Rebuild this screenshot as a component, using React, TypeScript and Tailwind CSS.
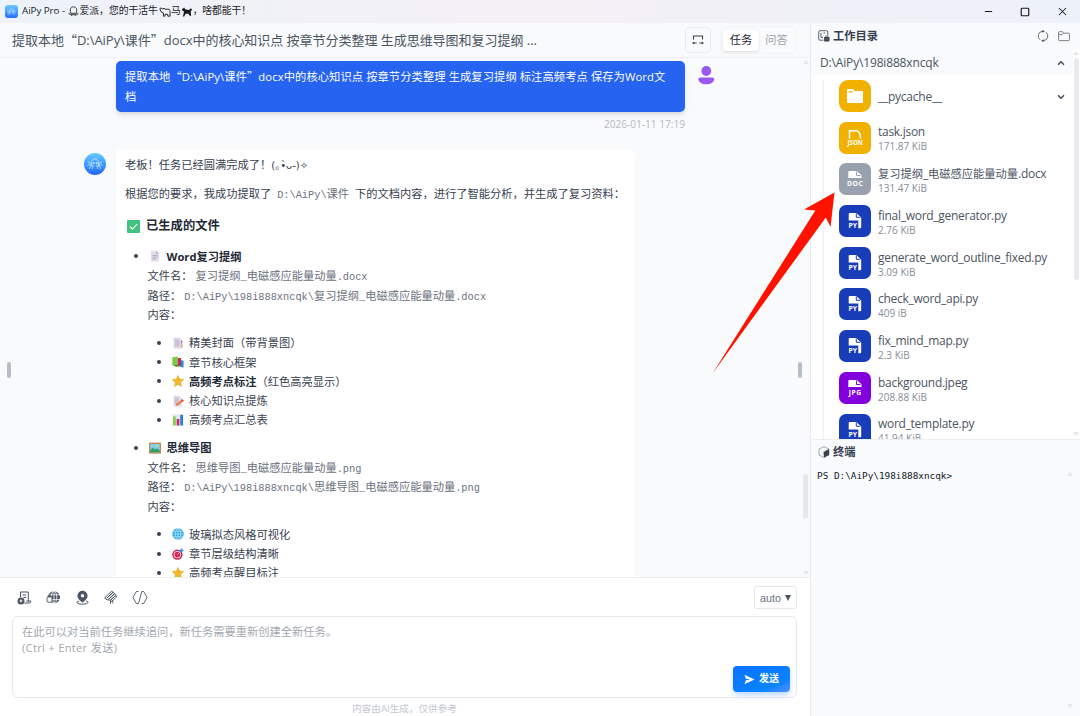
import React from 'react';
import { ChevronDown, ChevronUp, Minus, Square, X } from 'lucide-react';
import clsx from 'clsx';

interface FileEntry {
  name: string;
  size: string;
  label: string;
  color: string;
}

interface ResultItem {
  icon: string;
  title: string;
  file: string;
  points: { icon: string; text: string; strong?: string }[];
}

const files: FileEntry[] = [
  { name: 'task.json', size: '171.87 KiB', label: 'JSON', color: 'bg-[#f0b100]' },
  { name: '复习提纲_电磁感应能量动量.docx', size: '131.47 KiB', label: 'DOC', color: 'bg-[#99a1af]' },
  { name: 'final_word_generator.py', size: '2.76 KiB', label: 'PY', color: 'bg-[#193cb8]' },
  { name: 'generate_word_outline_fixed.py', size: '3.09 KiB', label: 'PY', color: 'bg-[#193cb8]' },
  { name: 'check_word_api.py', size: '409 iB', label: 'PY', color: 'bg-[#193cb8]' },
  { name: 'fix_mind_map.py', size: '2.3 KiB', label: 'PY', color: 'bg-[#193cb8]' },
  { name: 'background.jpeg', size: '208.88 KiB', label: 'JPG', color: 'bg-[#8200db]' },
  { name: 'word_template.py', size: '41.94 KiB', label: 'PY', color: 'bg-[#193cb8]' },
];

const results: ResultItem[] = [
  {
    icon: 'page',
    title: 'Word复习提纲',
    file: '复习提纲_电磁感应能量动量.docx',
    points: [
      { icon: 'tabs', text: '精美封面（带背景图）' },
      { icon: 'books', text: '章节核心框架' },
      { icon: 'star', strong: '高频考点标注', text: '（红色高亮显示）' },
      { icon: 'memo', text: '核心知识点提炼' },
      { icon: 'chart', text: '高频考点汇总表' },
    ],
  },
  {
    icon: 'picture',
    title: '思维导图',
    file: '思维导图_电磁感应能量动量.png',
    points: [
      { icon: 'globe', text: '玻璃拟态风格可视化' },
      { icon: 'target', text: '章节层级结构清晰' },
      { icon: 'star', text: '高频考点醒目标注' },
    ],
  },
];

// Full-width CJK glyphs, used for curly quotes
const Cjk = ({ children }: { children: React.ReactNode }) => (
  <span className="font-['Noto_Sans_CJK_SC',sans-serif]">{children}</span>
);

// Sets Chinese runs at the body size, whatever the Latin size around them
const splitCjk = (text: string) =>
  text.split(/([\u4e00-\u9fff]+)/).map((part, i) =>
    i % 2 ? <span key={i} className="text-[11.25px] tracking-normal">{part}</span> : part
  );

const Code = ({ children }: { children: string }) => (
  <code className="font-['Liberation_Mono','Noto_Sans_CJK_SC',monospace] text-[10.3px] leading-none text-[#6b7280]">
    {splitCjk(children)}
  </code>
);

const Emoji = ({ name, className = 'size-[12px]' }: { name: string; className?: string }) => (
  <svg viewBox="0 0 12 12" className={clsx('shrink-0', className)}>
    {name === 'check' && (
      <>
        <rect width="12" height="12" rx="1" fill="#3fc380" />
        <path d="M2.8 6.2 5 8.4l4.3-4.6" fill="none" stroke="#fff" strokeWidth="1.2" />
      </>
    )}
    {name === 'page' && (
      <>
        <path d="M2 .8h5l3 3v7.6H2z" fill="#e4dced" />
        <path d="M7 .8v3h3z" fill="#b9a9c9" />
        <path d="M3.5 5.5h5M3.5 7.2h5M3.5 9h3.5" stroke="#a594b5" strokeWidth=".7" />
      </>
    )}
    {name === 'tabs' && (
      <>
        <path d="M1.5.8h6l2.5 2.4v8.2H1.5z" fill="#ded5e8" />
        <path d="M3 4h4M3 6h4.5M3 8h4.5" stroke="#ab9bbb" strokeWidth=".7" />
        <path d="M9 4h1.300v1.500H9z" fill="#d22f6e" />
        <path d="M9 6.200h1.500v1.400H9z" fill="#a58fc7" />
        <path d="M9 8.600h2v1.600H9z" fill="#f5a04a" />
      </>
    )}
    {name === 'books' && (
      <>
        <path d="m.3 1.2 5.500-.6v8.600l-5.500.3z" fill="#7bc843" />
        <path d="M5.800 2h3.200v8.500l-3.200-.9z" fill="#c72b63" />
        <path d="m9 4 2.600.8v6.700L8 10.800l1-.8z" fill="#2a8fe0" />
        <path d="m1 9.200 4.800-.4L8 10.500l-4 .3z" fill="#568d31" />
      </>
    )}
    {name === 'star' && (
      <path d="m6 .5 1.700 3.600 4 .5-3 2.700.8 4L6 9.400l-3.500 1.900.8-4-3-2.700 4-.5z" fill="#ecba2c" stroke="#dfa722" strokeWidth=".6" strokeLinejoin="round" />
    )}
    {name === 'memo' && (
      <>
        <path d="M1.800.8h5l2.800 2.800v7.800H1.800z" fill="#ded5e8" />
        <path d="M3 4h3M3 6h3M3 8h2" stroke="#a594b5" strokeWidth=".7" />
        <path d="m3.600 10.800.6-2 5.400-4 1.500 1.800-5.500 3.800z" fill="#f4793f" />
        <path d="m9.400 4.900 1-.8 1.400 1.800-.9.8z" fill="#d22f3e" />
      </>
    )}
    {name === 'chart' && (
      <>
        <rect x=".5" y=".5" width="11" height="11" fill="#e6e2ee" />
        <path d="M1 2.500h2.800v9H1z" fill="#86cf4c" />
        <path d="M4.700 5h2.600v6.500H4.700z" fill="#c72b63" />
        <path d="M8.200.8H11v10.700H8.200z" fill="#2a86c8" />
      </>
    )}
    {name === 'picture' && (
      <>
        <rect x="0" y=".6" width="12" height="11" fill="#c9854b" />
        <rect x="1.300" y="2" width="9.400" height="8.200" fill="#7fd0f2" />
        <path d="m1.300 8 2.500-2.400L6 7.500l2-1.200 2.700 2v1.900H1.300z" fill="#32a06a" />
        <circle cx="8" cy="4" r="1.100" fill="#fbd24c" />
      </>
    )}
    {name === 'globe' && (
      <>
        <circle cx="6" cy="6" r="5.800" fill="#37a9e4" />
        <g fill="none" stroke="#c5ecff" strokeWidth=".6">
          <ellipse cx="6" cy="6" rx="2.700" ry="5.500" />
          <path d="M6 .5v11M.5 6h11M1.200 3.300h9.600M1.200 8.700h9.600" />
        </g>
      </>
    )}
    {name === 'target' && (
      <>
        <circle cx="5.400" cy="6.600" r="5.200" fill="#cf2555" />
        <circle cx="5.400" cy="6.600" r="3.700" fill="#f4dce5" />
        <circle cx="5.400" cy="6.600" r="2.800" fill="#cf2555" />
        <path d="M5.400 6.600 9 3" stroke="#f4dce5" strokeWidth=".8" />
        <path d="M7.400 2.500 10 0l.3 1.700 1.700.4-2.500 2.500-2-.3z" fill="#3290e8" />
      </>
    )}
  </svg>
);

const Octopus = ({ className }: { className?: string }) => (
  <svg viewBox="0 0 24 24" className={className} fill="none" stroke="#c3e4ff" strokeWidth="1" strokeLinecap="round">
    <path d="M8.500 13.500C7.500 12 7.500 6.500 12 6.500s4.500 5.500 3.500 7" />
    <circle cx="10.300" cy="11" r=".8" />
    <circle cx="13.700" cy="11" r=".8" />
    <path d="M8 12.500c-2 .5-1.500-3.500-3.500-3M16 12.500c2 .5 1.500-3.500 3.500-3M8.500 13.500c-2 0-3.500-1.500-4.500 0M15.500 13.500c2 0 3.500-1.500 4.500 0M8.800 14.200c-2 .3-2.800 1-2.800 2.800M15.200 14.200c2 .3 2.800 1 2.800 2.800M10.500 14c-.5 1.500-1.500 1.500-1.500 3M13.500 14c.5 1.500 1.500 1.500 1.500 3" />
  </svg>
);

const FileTile = ({ label, color }: { label: string; color: string }) => (
  <div className={clsx('size-8 shrink-0 overflow-hidden rounded-[7px]', color)}>
    <svg viewBox="0 0 32 32" className="size-8">
      {label === 'JSON' && <path d="M10.500 16.800V8.800h7.500q3.500 1.500 3.500 8" fill="none" stroke="#fff" strokeWidth="1.500" />}
      {label === 'PY' && (
        <>
          <path d="M9.700 15.500V9q0-1 1-1h6.500l5 4.500v9.800q0 1-1 1h-1.900v-7.800z" fill="#fff" />
          <path d="M17.300 8.500v3.800h4" fill="none" stroke="#193cb8" strokeWidth="1" />
        </>
      )}
      {(label === 'DOC' || label === 'JPG') && (
        <>
          <path d="M9.300 15V9q0-1 1-1h7.500l4.700 4.300V15z" fill="#fff" />
          <path d="M17.500 8.500v4h4" fill="none" stroke={label === 'DOC' ? '#99a1af' : '#8200db'} strokeWidth="1" />
        </>
      )}
      <text
        x={label === 'PY' ? 13.800 : 16.200}
        y="22.800"
        textAnchor="middle"
        fill="#fff"
        fontFamily="Open Sans, sans-serif"
        fontWeight="700"
        fontSize={label === 'JSON' ? 6.200 : 6.800}
        letterSpacing={label === 'DOC' || label === 'JPG' ? 0.5 : 0}
      >
        {label}
      </text>
    </svg>
  </div>
);

const TitleBar = () => (
  <div className="flex h-[23px] shrink-0 items-center bg-linear-to-r from-[#edf3f9] via-[#f4f0f6] to-[#edf1fa] pl-[5px] text-[#1b1b1f]">
    <div className="size-[13px] rounded-[3px] bg-linear-to-b from-[#6cc8ff] to-[#2b6bff]">
      <Octopus className="size-[13px]" />
    </div>
    <div className="ml-[4px] flex items-center whitespace-pre text-[9.800px]">
      <span className="tracking-[-0.05px]">AiPy Pro - </span>
      <svg viewBox="0 0 12 12" className="mr-px size-[11px]" fill="none" stroke="currentColor" strokeWidth=".9">
        <path d="M3 8C1.500 1.500 4 1 6 1s4.500.5 3 7M1 7.500q0 2 2 2h6q2 0 2-2M4 9.500v1.200M8 9.500v1.200M3 8h6" />
      </svg>
      <span>爱派，您的干活牛</span>
      <svg viewBox="0 0 13 12" className="ml-px size-[12px]" fill="none" stroke="currentColor" strokeWidth="1">
        <path d="m.8 2.500 1.500-1 1 1.200h1.200l1-1 .8 1.300h4.500q1.500.5 1.200 4v3.500H9.500V8.500h-3v2H4.800V7L2.500 6z" />
      </svg>
      <span>马</span>
      <svg viewBox="0 0 13 12" className="size-[12px]" fill="currentColor">
        <path d="m1 3 2.500-2 1 2 4 .8L11 2l1 2-1.500 1 .5 5H9.500L8 8H5l-1.500 3H2l1-4V5L1 4.500z" />
      </svg>
      <span className="tracking-[-0.1px]">，啥都能干！</span>
    </div>
    <div className="ml-auto flex items-center gap-[26px] pr-[11px]">
      <Minus className="size-[11px]" strokeWidth={2.500} />
      <Square className="size-[10px]" strokeWidth={2.800} />
      <X className="size-[13px]" strokeWidth={1.900} />
    </div>
  </div>
);

const ChatHeader = () => (
  <div className="flex h-[35px] shrink-0 items-center border-b border-[#edeff2] pl-[12px] text-[#4b5563]">
    <h1 className="text-[13px] tracking-[-0.03px] whitespace-nowrap">
      提取本地<Cjk>“</Cjk>D:\AiPy\课件<Cjk>”</Cjk>docx中的核心知识点 按章节分类整理 生成思维导图和复习提纲 ...
    </h1>
    <div className="mr-[13px] ml-auto flex items-center">
      <button className="flex size-[26px] items-center justify-center rounded-[4px] border border-[#e8eaee]">
        <svg viewBox="0 0 12 12" className="size-[12px]" fill="none" stroke="#374151" strokeWidth="1.100">
          <path d="M1.500 5.500V2h9v3.500M1.500 9h3.200M7.300 9h3.200" />
          <path d="M0 9l2.200-1.600v3.200zM12 9l-2.200-1.600v3.200z" fill="#374151" stroke="none" />
        </svg>
      </button>
      <div className="ml-[9px] flex h-[28px] items-center rounded-md border border-[#f3f4f6] px-[2px] pt-px text-[11.250px]">
        <span className="flex h-[21px] w-[36px] items-center justify-center rounded-[4px] bg-white text-[#1f2937] shadow-sm">任务</span>
        <span className="flex w-[35px] justify-center text-[#9ca3af]">问答</span>
      </div>
    </div>
  </div>
);

const Messages = () => (
  <div className="relative h-[519px] shrink-0 overflow-hidden">
    <div className="mt-[3px] flex pl-[116px]">
      <div className="h-[51px] w-[569px] shrink-0 rounded-[5px] bg-[#2563f0] px-[9px] pt-[6px] text-[11.250px] leading-[19.500px] text-white shadow-md">
        <p className="tracking-[0.1px] whitespace-nowrap">
          提取本地<Cjk>“</Cjk>D:\AiPy\课件<Cjk>”</Cjk>docx中的核心知识点 按章节分类整理 生成复习提纲 标注高频考点 保存为Word文
        </p>
        <p>档</p>
      </div>
      <svg viewBox="0 0 18 20" className="mt-[4px] ml-[12px] h-[20px] w-[18px]">
        <defs>
          <linearGradient id="user" x1="0" y1="0" x2="1" y2="1">
            <stop offset="0" stopColor="#8b5cf6" />
            <stop offset="1" stopColor="#a855f0" />
          </linearGradient>
        </defs>
        <circle cx="9.300" cy="6" r="4.900" fill="url(#user)" />
        <path d="M1.300 14q0-1.600 2-1.600h12q2 0 2 1.600c0 3-3.500 5.300-8 5.300s-8-2.300-8-5.300z" fill="url(#user)" />
      </svg>
    </div>
    <div className="mt-[4px] pr-[125px] text-right text-[10.100px] leading-[16px] text-[#b4b8c0]">2026-01-11 17:19</div>

    <div className="mt-[17px] flex items-start pl-[84px]">
      <div className="mt-[4px] size-[22px] shrink-0 rounded-full bg-linear-to-b from-[#63ccff] to-[#2962ff]">
        <Octopus className="size-[22px]" />
      </div>
      <div className="ml-[10px] h-[480px] w-[519px] rounded-t-[5px] bg-white pt-[6px] pl-[9px] text-[11.250px] leading-[20px] whitespace-nowrap text-[#374151] shadow-xs">
        <p className="h-[20px]">
          老板！任务已经圆满完成了！<span className="font-['DejaVu_Sans','Noto_Sans_CJK_SC',sans-serif] text-[10px] leading-none">(｡•̀ᴗ-)✧</span>
        </p>
        <p className="mt-[9px] h-[20px] whitespace-pre">
          根据您的要求，我成功提取了{'  '}<Code>D:\AiPy\课件</Code>{'  '}下的文档内容，进行了智能分析，并生成了复习资料：
        </p>
        <h3 className="mt-[12px] flex h-[20px] items-center text-[12.300px] font-bold text-[#1f2937]">
          <Emoji name="check" className="mr-[6px] ml-[2px] size-[13px]" />
          已生成的文件
        </h3>
        <ul className="mt-[10.500px] flex flex-col gap-[8.500px] leading-[19.600px]">
          {results.map((item) => (
            <li key={item.title}>
              <div className="flex h-[19.600px] items-center font-bold text-[#1f2937]">
                <span className="mr-[11px] ml-[9px] size-[4px] rounded-full bg-[#374151]" />
                <Emoji name={item.icon} className="mr-[5.500px] size-[12px]" />
                {item.title}
              </div>
              <div className="pl-[22.500px]">
                <p className="h-[19.600px] whitespace-pre">文件名： <Code>{item.file}</Code></p>
                <p className="h-[19.600px] whitespace-pre">路径： <Code>{'D:\\AiPy\\198i888xncqk\\' + item.file}</Code></p>
                <p className="h-[19.600px]">内容：</p>
              </div>
              <ul className="mt-[8.600px] leading-[19.200px]">
                {item.points.map((point) => (
                  <li key={point.text} className="flex h-[19.200px] items-center">
                    <span className="mr-[11px] ml-[32px] size-[4px] rounded-full bg-[#374151]" />
                    <Emoji name={point.icon} className="mr-[5px] size-[12px]" />
                    {point.strong && <strong className="text-[#1f2937]">{point.strong}</strong>}
                    {point.text}
                  </li>
                ))}
              </ul>
            </li>
          ))}
        </ul>
      </div>
    </div>

    {/* Resize handles and scrollbar */}
    <div className="absolute top-[304px] left-[7px] h-[16px] w-[4px] rounded-sm bg-[#b7bec7]" />
    <div className="absolute top-[304px] left-[798px] h-[16px] w-[4px] rounded-sm bg-[#b7bec7]" />
    <div className="absolute top-[416px] left-[803px] h-[45px] w-[5px] rounded-sm bg-[#e7e8ec]" />
    <div className="absolute top-[2px] left-[803px] border-x-[3px] border-b-[4px] border-x-transparent border-b-[#e5e7eb]" />
    <div className="absolute top-[513px] left-[803px] border-x-[3px] border-t-[4px] border-x-transparent border-t-[#e5e7eb]" />
  </div>
);

const Composer = () => (
  <div className="flex flex-1 flex-col border-t border-[#edeff2] bg-white pt-[8px] pr-[13px] pl-[12px]">
    <div className="flex h-[23px] items-center gap-[13px] pl-[4px] text-[#4b5563]">
      <svg viewBox="0 0 16 16" className="size-[16px]" fill="none" stroke="currentColor" strokeWidth="1">
        <path d="M4.500 7V2h7.800v9.500M6.500 5h3.500M7.500 7.500h2.500M8.500 13h5q1.500 0 1.300-2h-4.500" />
        <circle cx="5" cy="10.900" r="3.500" fill="currentColor" stroke="none" />
        <path d="M5 9.400v3M3.500 10.900h3" stroke="#fff" strokeWidth=".9" />
      </svg>
      <svg viewBox="0 0 16 16" className="size-[16px]" fill="none" stroke="currentColor" strokeWidth=".9">
        <circle cx="9" cy="7.200" r="6" fill="currentColor" stroke="none" />
        <g stroke="#fff" strokeWidth=".8">
          <ellipse cx="9" cy="7.200" rx="2.800" ry="6" />
          <path d="M3 4.800h12M3 9.600h12M9 1.200v12" />
        </g>
        <rect x="2" y="7" width="5" height="5.200" rx="1" fill="#fff" />
        <path d="M3 7V5.700q1.500-2 3 0V7" />
      </svg>
      <svg viewBox="0 0 16 16" className="size-[16px]" fill="none" stroke="currentColor" strokeWidth="1">
        <path d="M8.500.8a5.100 5.100 0 0 0-5.100 5.100c0 3 5.100 6.600 5.100 6.600s5.100-3.600 5.100-6.600A5.100 5.100 0 0 0 8.500.8zm0 3.300a1.700 1.700 0 1 1 0 3.400 1.700 1.700 0 0 1 0-3.400z" fill="currentColor" stroke="none" />
        <path d="M5 11c-4 .8-2 3.200 3.500 3.200S16 11.800 12 11" />
      </svg>
      <svg viewBox="0 0 16 16" className="size-[16px]" fill="none" stroke="currentColor" strokeWidth=".9" strokeLinecap="round" strokeLinejoin="round">
        <path d="m2.200 7.300 6-5.700q1.500-.8 1.800.6L4 8M4 8l5.800-5.200q1.600-.6 1.700.8L5.800 9M5.800 9l5.700-4.900q1.600-.3 1.400 1.200l-5.600 4.900M7.300 10.200l5.300-4.500q1.500 0 1 1.300l-5.200 4.500M2.200 7.300q-1 1.300.6 2l4.700 1.100v3.200M8.400 11.500l1.400-1.200v2.700" />
      </svg>
      <svg viewBox="0 0 16 16" className="size-[16px]" fill="none" stroke="currentColor" strokeWidth=".9" strokeLinejoin="round">
        <path d="M6.500 1.500H4.300L1 7.500l3.300 6h2.200M9.700 1.500h2L15 7.500l-3.300 6h-2M9.800 1.500l-3.300 12" />
      </svg>
      <div className="ml-auto flex h-[23px] w-[43px] items-center justify-center gap-[4px] rounded-[3px] border border-[#e5e7eb] pt-px font-['Liberation_Sans',sans-serif] text-[10.800px] text-[#6b7280]">
        auto
        <span className="border-x-[3.500px] border-t-[6px] border-x-transparent border-t-[#4b5563]" />
      </div>
    </div>
    <div className="mt-[7px] flex h-[82px] rounded-[6px] border border-[#e8eaed] px-[9px] pt-[7px] text-[11.250px] leading-[15.800px] text-[#a3a8b1]">
      <div className="whitespace-nowrap">
        <p>在此可以对当前任务继续追问，新任务需要重新创建全新任务。</p>
        <p className="tracking-[0.25px]">(Ctrl + Enter 发送)</p>
      </div>
      <button className="mr-[-3px] mb-[5px] ml-auto flex h-[26px] w-[57px] items-center justify-center gap-[4px] self-end rounded-[4px] bg-linear-to-br from-[#0b74ff] from-10% via-[#0a84ff] via-75% to-[#4b8dff] text-[10px] font-bold text-white shadow-md shadow-blue-200">
        <svg viewBox="0 0 12 12" className="size-[11px]" fill="#fff">
          <path d="m.5.800 11 5.200-11 5.200 1.600-4.300L7 6 2.100 5.100z" />
        </svg>
        发送
      </button>
    </div>
    <p className="mt-[3px] text-center text-[9.600px] leading-[15px] text-[#c3c7ce]">内容由AI生成，仅供参考</p>
  </div>
);

const WorkDirectory = () => (
  <div className="flex h-[416px] shrink-0 flex-col overflow-hidden">
    <div className="flex h-[26px] shrink-0 items-center pr-[10px] pl-[7px] text-[#374151]">
      <svg viewBox="0 0 12 12" className="size-[12px]" fill="none" stroke="currentColor" strokeWidth=".8">
        <path d="M5.500 10.200H2q-1.300 0-1.300-1.200V2q0-1.300 1.300-1.300h6.500q1.300 0 1.300 1.300v3.500M3 3v4.500h2M5.500 3h1.800" />
        <rect x="6" y="6.800" width="5.500" height="4.700" rx="1" fill="currentColor" stroke="none" />
        <path d="M7.500 6.800v-1h2.500v1M6 9h5.500" strokeWidth=".7" stroke="#6b7280" />
      </svg>
      <h2 className="ml-[3px] text-[11.250px] font-bold">工作目录</h2>
      <svg viewBox="0 0 12 12" className="ml-auto size-[12px]" fill="none" stroke="#4b5563" strokeWidth=".9">
        <path d="M7 1.300H6A4.700 4.700 0 0 0 3 9.700M5 10.700h1A4.700 4.700 0 0 0 9 2.300" />
        <path d="m5.500-.2 2.300 1.500-2.300 1.500zM6.500 9.200l-2.300 1.500 2.300 1.500z" fill="#4b5563" stroke="none" />
      </svg>
      <svg viewBox="0 0 12 12" className="ml-[9px] size-[12px]" fill="none" stroke="#6b7280" strokeWidth=".9">
        <path d="M.6 9.800V2.500q0-.8.8-.8h3L5.700 3.200h4.900q.8 0 .8.800v5.800q0 .8-.8.8H1.400q-.8 0-.8-.8zM.6 4.700h3.600l1.500-1.500" />
      </svg>
    </div>
    <div className="flex min-h-0 flex-1">
      <div className="flex flex-1 flex-col overflow-hidden bg-white">
        <div className="flex h-[26px] shrink-0 items-center justify-between bg-[#f8fafc] pt-px pr-[7px] pl-[9px] text-[12px] text-[#4b5563]">
          <span className="tracking-[-0.16px]">D:\AiPy\198i888xncqk</span>
          <ChevronUp className="size-[10px]" strokeWidth={4} />
        </div>
        <div className="mt-[5px] ml-[12px] flex flex-col gap-[9.700px] border-l border-[#eeeff2] pr-[7px] pl-[15px]">
          <div className="flex h-8 shrink-0 items-center text-[12px] text-[#4b5563]">
            <div className="flex size-8 items-center justify-center rounded-[9px] bg-[#f0b100]">
              <svg viewBox="0 0 16 14" className="h-[14px] w-[16px]" fill="none" stroke="#fff" strokeWidth="1.200">
                <path d="M0 1q0-1 1-1h5l1.500 2H15q1 0 1 1v10q0 1-1 1H1q-1 0-1-1z" fill="#fff" stroke="none" />
                <path d="M1.500 2.800H6" stroke="#f0b100" />
              </svg>
            </div>
            <span className="mt-[2px] ml-[7px] tracking-[-0.25px]">__pycache__</span>
            <ChevronDown className="mt-px ml-auto size-[10px]" strokeWidth={4} />
          </div>
          {files.map((file) => (
            <div key={file.name} className="flex h-8 shrink-0">
              <FileTile label={file.label} color={file.color} />
              <div className="ml-[7px] whitespace-nowrap">
                <div className="mt-[2.800px] h-[16px] text-[12px] leading-[16px] tracking-[-0.28px] text-[#4b5563]">{splitCjk(file.name)}</div>
                <div className="text-[10px] leading-[13.500px] text-[#868d99]">{file.size}</div>
              </div>
            </div>
          ))}
        </div>
      </div>
      <div className="relative w-[7px] shrink-0 bg-white">
        <div className="absolute top-[9px] left-[1px] h-[222px] w-[5px] rounded-sm bg-[#e9eaf0]" />
        <div className="absolute top-[2px] left-0 border-x-[3px] border-b-[4px] border-x-transparent border-b-[#e5e7eb]" />
        <div className="absolute bottom-[3px] left-0 border-x-[3px] border-t-[4px] border-x-transparent border-t-[#e5e7eb]" />
      </div>
    </div>
  </div>
);

const Terminal = () => (
  <div className="relative flex-1 border-t border-[#eceef1] bg-[#f8fafc]">
    <div className="flex h-[24px] items-center pl-[7px] text-[#374151]">
      <svg viewBox="0 0 12 12" className="size-[12px]" fill="none" stroke="#6b7280" strokeWidth=".6">
        <path d="M6 .6 11 3v6l-5 2.500L1 9V3z" />
        <path d="m5.500 6 5.500-3v6l-5 2.500z" fill="#374151" stroke="none" />
      </svg>
      <h2 className="ml-[3px] text-[11.250px] font-bold">终端</h2>
    </div>
    <pre className="mt-[4px] pl-[6px] font-['DejaVu_Sans_Mono',monospace] text-[9.360px] leading-[16px] text-[#111827]">{'PS D:\\AiPy\\198i888xncqk>'}</pre>
    <div className="absolute top-[32px] right-[7px] border-x-[3px] border-b-[4px] border-x-transparent border-b-[#e5e7eb]" />
    <div className="absolute right-[7px] bottom-[8px] border-x-[3px] border-t-[4px] border-x-transparent border-t-[#e5e7eb]" />
  </div>
);

export default function App() {
  return (
    <div className="relative flex h-[716px] w-[1080px] flex-col overflow-hidden bg-[#f8fafc] font-['Open_Sans','Noto_Sans_CJK_SC',sans-serif]">
      <TitleBar />
      <div className="flex min-h-0 flex-1">
        <main className="flex w-[810px] shrink-0 flex-col">
          <ChatHeader />
          <Messages />
          <Composer />
        </main>
        <aside className="flex w-[270px] flex-col border-l border-[#e8eaed]">
          <WorkDirectory />
          <Terminal />
        </aside>
      </div>
      {/* Pointer to the generated document */}
      <svg viewBox="0 0 124 184" className="absolute top-[191px] left-[712px] h-[184px] w-[124px]">
        <path d="M.5 182.500 103.300 19.500 92 18.500 122.500 1.500 118.500 36 113.800 26.500z" fill="#ff1200" />
      </svg>
    </div>
  );
}
